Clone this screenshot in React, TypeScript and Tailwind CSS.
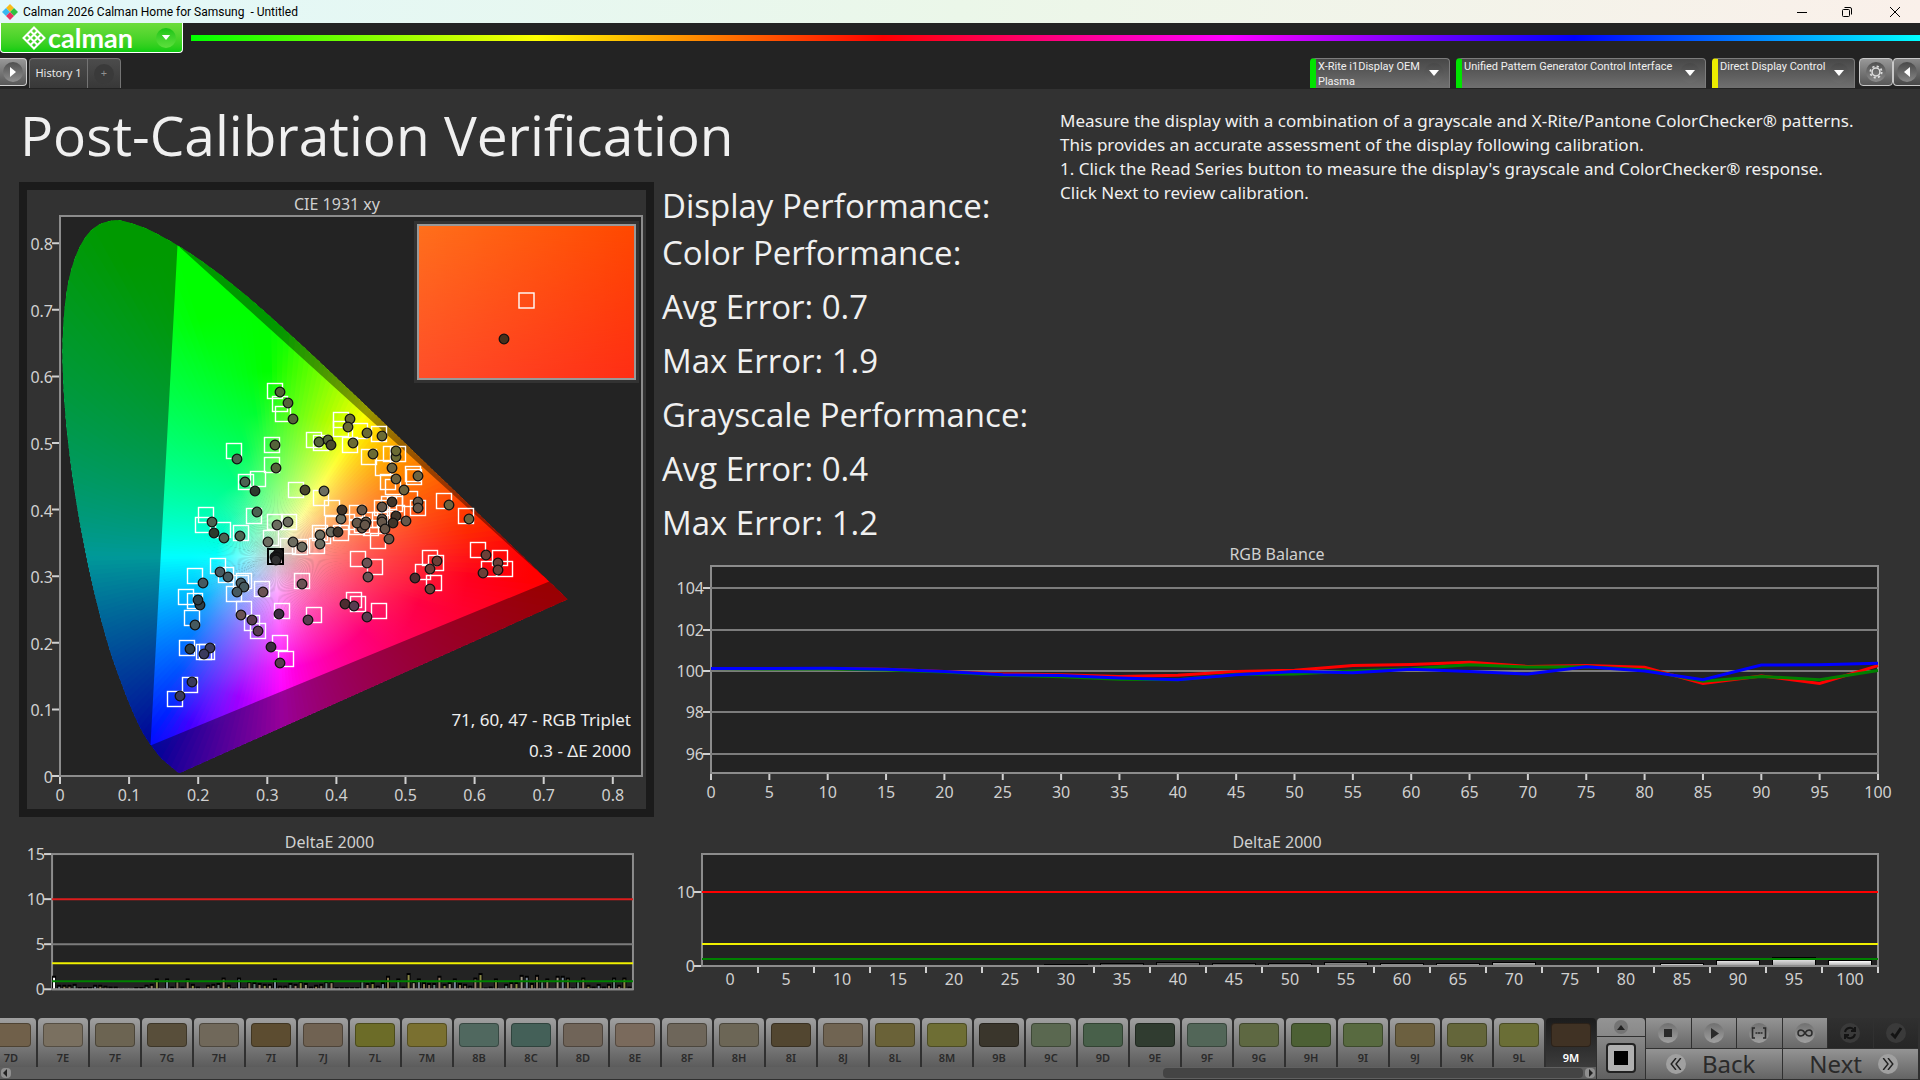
import type { ReactNode } from "react";

type Point = [number, number];

// ---------- CIE chart data ----------

const LOCUS: Point[] = [
  [0.1741, 0.005], [0.1714, 0.0051], [0.1644, 0.0109], [0.1566, 0.0177], [0.144, 0.0297],
  [0.1241, 0.0578], [0.1096, 0.0868], [0.0913, 0.1327], [0.0687, 0.2007], [0.0454, 0.295],
  [0.0235, 0.4127], [0.0082, 0.5384], [0.0039, 0.6548], [0.0139, 0.7502], [0.0389, 0.812],
  [0.0743, 0.8338], [0.1142, 0.8262], [0.1547, 0.8059], [0.1929, 0.7816], [0.2296, 0.7543],
  [0.2658, 0.7243], [0.3016, 0.6923], [0.3373, 0.6589], [0.3731, 0.6245], [0.4087, 0.5896],
  [0.4441, 0.5547], [0.4788, 0.5202], [0.5125, 0.4866], [0.5448, 0.4544], [0.5752, 0.4242],
  [0.6029, 0.3965], [0.627, 0.3725], [0.6482, 0.3514], [0.6658, 0.334], [0.6915, 0.3083],
  [0.714, 0.2859], [0.73, 0.27], [0.7347, 0.2653],
];

const GAMUT: Point[] = [[0.17, 0.797], [0.708, 0.292], [0.131, 0.046]];
const WHITE: Point = [0.3127, 0.329];

const cieX = (x: number) => 33 + x * 691;
const cieY = (y: number) => 586 - y * 666;
const toPoints = (pts: Point[]) => pts.map(([x, y]) => `${cieX(x).toFixed(1)},${cieY(y).toFixed(1)}`);

// Catmull-Rom subdivision, keeps the tip of the locus round
function smooth(pts: Point[], steps = 6): Point[] {
  const out: Point[] = [];
  for (let i = 0; i < pts.length - 1; i++) {
    const p0 = pts[Math.max(i - 1, 0)];
    const p1 = pts[i];
    const p2 = pts[i + 1];
    const p3 = pts[Math.min(i + 2, pts.length - 1)];
    for (let s = 0; s < steps; s++) {
      const t = s / steps;
      const at = (k: 0 | 1) =>
        0.5 *
        (2 * p1[k] +
          (p2[k] - p0[k]) * t +
          (2 * p0[k] - 5 * p1[k] + 4 * p2[k] - p3[k]) * t * t +
          (3 * p1[k] - p0[k] - 3 * p2[k] + p3[k]) * t * t * t);
      out.push([at(0), at(1)]);
    }
  }
  out.push(pts[pts.length - 1]);
  return out;
}

// chromaticity to a display colour at full brightness
function xyToColor(x: number, y: number) {
  const yy = Math.max(y, 0.002);
  const X = x / yy;
  const Z = (1 - x - yy) / yy;
  const rgb = [
    3.2406 * X - 1.5372 - 0.4986 * Z,
    -0.9689 * X + 1.8758 + 0.0415 * Z,
    0.0557 * X - 0.204 + 1.057 * Z,
  ].map((v) => Math.max(v, 0));
  const max = Math.max(...rgb);
  const [r, g, b] = rgb.map((v) => Math.round(255 * Math.pow(v / max, 1 / 1.3)));
  return `rgb(${r},${g},${b})`;
}

const WEDGES = 240;
const REACH = 0.62;
const STOPS = [0, 0.02, 0.05, 0.09, 0.14, 0.2, 0.27, 0.35, 0.45, 0.6, 0.8, 1];

const TARGETS: Point[] = [
  [248, 201], [253, 214], [256, 224], [245, 255], [207, 261], [245, 275], [219, 292], [231, 289],
  [287, 250], [294, 253], [314, 230], [314, 239], [333, 241], [352, 244], [323, 255], [342, 267],
  [364, 264], [371, 264], [356, 278], [386, 284], [387, 287], [361, 292], [366, 297], [383, 309],
  [269, 300], [294, 308], [305, 318], [417, 311], [439, 326], [391, 318], [355, 318], [362, 314],
  [368, 314], [330, 323], [370, 323], [306, 334], [320, 332], [330, 337], [335, 335], [343, 330],
  [344, 338], [353, 330], [362, 327], [314, 343], [351, 351], [293, 343], [296, 346], [290, 356],
  [273, 357], [261, 356], [244, 348], [248, 332], [262, 332], [227, 326], [214, 343], [196, 340],
  [179, 325], [176, 335], [191, 376], [199, 385], [168, 386], [331, 369], [348, 377], [403, 368],
  [409, 373], [396, 382], [451, 360], [473, 368], [462, 379], [478, 379], [217, 391], [214, 393],
  [207, 404], [235, 399], [275, 391], [159, 407], [168, 411], [165, 428], [217, 419], [225, 433],
  [231, 441], [255, 421], [287, 425], [327, 410], [331, 414], [352, 421], [407, 393], [253, 453],
  [259, 469], [160, 458], [177, 462], [180, 462], [163, 495], [148, 509],
];

const MEASURED: { fill: string; at: Point[] }[] = [
  { fill: "#55633a", at: [[253, 202], [261, 213], [266, 229], [248, 255], [249, 278], [292, 252], [301, 250]] },
  { fill: "#4b6351", at: [[210, 269], [218, 292], [230, 322], [185, 332], [213, 346], [197, 348]] },
  { fill: "#2c3a2c", at: [[228, 301], [187, 343]] },
  { fill: "#6b6b34", at: [[323, 229], [321, 237], [340, 243], [355, 246], [326, 253], [346, 264], [369, 267], [369, 261]] },
  { fill: "#4a4a2c", at: [[304, 255], [278, 300]] },
  { fill: "#6e6440", at: [[365, 278], [391, 286], [369, 289], [377, 300], [422, 315], [442, 329]] },
  { fill: "#6c6c60", at: [[297, 301], [314, 329], [304, 342], [293, 345], [293, 354], [275, 357], [266, 352], [241, 352], [250, 335], [261, 332]] },
  { fill: "#66574a", at: [[335, 320], [355, 317], [391, 312], [391, 318], [339, 332], [335, 338], [330, 333], [338, 335], [355, 329], [355, 332], [379, 331], [358, 339], [362, 349]] },
  { fill: "#40352a", at: [[315, 320], [365, 312], [369, 326], [366, 333], [311, 342]] },
  { fill: "#465a60", at: [[193, 382], [201, 387], [176, 393], [214, 393], [217, 397], [210, 402], [168, 435]] },
  { fill: "#2d3f48", at: [[173, 415], [171, 410], [163, 459]] },
  { fill: "#6a5254", at: [[340, 373], [341, 387], [275, 394], [236, 402], [214, 425]] },
  { fill: "#6b4038", at: [[410, 371], [403, 379], [459, 365], [471, 373], [471, 380], [456, 383], [403, 399]] },
  { fill: "#4c2c30", at: [[388, 388], [318, 414]] },
  { fill: "#583c50", at: [[225, 430], [231, 441], [281, 430], [327, 416], [340, 427], [253, 473]] },
  { fill: "#3c2c40", at: [[252, 424], [244, 457]] },
  { fill: "#3a3a5c", at: [[183, 458], [177, 464], [165, 492], [153, 506]] },
  { fill: "#181818", at: [[251, 364], [248, 367], [250, 367]] },
  { fill: "#303030", at: [[249, 370]] },
];

function CieChart() {
  const locus = toPoints(smooth(LOCUS));
  const gamut = toPoints(GAMUT);
  const cx = cieX(WHITE[0]);
  const cy = cieY(WHITE[1]);
  const ray = (i: number): Point => {
    const a = (i / WEDGES) * Math.PI * 2;
    return [WHITE[0] + REACH * Math.cos(a), WHITE[1] + REACH * Math.sin(a)];
  };
  const wedges = Array.from({ length: WEDGES }, (_, i) => i);

  return (
    <svg viewBox="0 0 619 619" className="block w-full" role="img" aria-label="CIE 1931 xy">
      <defs>
        <clipPath id="locus"><polygon points={locus.join(" ")} /></clipPath>
        {wedges.map((i) => {
          const [ex, ey] = ray(i + 0.5);
          return (
            <linearGradient key={i} id={`w${i}`} gradientUnits="userSpaceOnUse" x1={cx} y1={cy} x2={cieX(ex)} y2={cieY(ey)}>
              {STOPS.map((s) => (
                <stop
                  key={s}
                  offset={s}
                  stopColor={xyToColor(WHITE[0] + (ex - WHITE[0]) * s, WHITE[1] + (ey - WHITE[1]) * s)}
                />
              ))}
            </linearGradient>
          );
        })}
        <linearGradient id="insetTop"><stop offset="0" stopColor="#ff701c" /><stop offset="1" stopColor="#ff4800" /></linearGradient>
        <linearGradient id="insetLow"><stop offset="0" stopColor="#ff4e2a" /><stop offset="1" stopColor="#ff2d14" /></linearGradient>
        <linearGradient id="fade" x2="0" y2="1"><stop offset="0" stopColor="#000" /><stop offset="1" stopColor="#fff" /></linearGradient>
        <mask id="insetMask"><rect x="391" y="35" width="217" height="154" fill="url(#fade)" /></mask>
      </defs>

      <text x="310" y="20" textAnchor="middle" className="fill-[#d0d0d0] text-[16px]">CIE 1931 xy</text>
      <rect x="33" y="26" width="582" height="560" fill="#232323" />
      <g clipPath="url(#locus)">
        {wedges.map((i) => (
          <polygon key={i} fill={`url(#w${i})`} points={[`${cx},${cy}`, ...toPoints([ray(i - 0.2), ray(i + 1.2)])].join(" ")} />
        ))}
      </g>
      <path d={`M${locus.join("L")}ZM${gamut.join("L")}Z`} fillRule="evenodd" fill="#000" fillOpacity="0.4" />

      <rect x="33" y="26" width="582" height="560" fill="none" stroke="#8c8c8c" strokeWidth="2" />
      {[0, 1, 2, 3, 4, 5, 6, 7, 8].map((n) => (
        <g key={n} className="fill-[#d0d0d0] text-[16px]">
          <path d={`M${cieX(n / 10)} 587v7M25 ${cieY(n / 10)}h7`} stroke="#d0d0d0" strokeWidth="2" />
          <text x={cieX(n / 10)} y="611" textAnchor="middle">{n === 0 ? "0" : `0.${n}`}</text>
          <text x="26" y={cieY(n / 10) + 7} textAnchor="end">{n === 0 ? "0" : `0.${n}`}</text>
        </g>
      ))}

      {TARGETS.map(([x, y], i) => (
        <rect key={i} x={x - 7.5} y={y - 7.5} width="15" height="15" fill="none" stroke="#fff" strokeWidth="1.4" />
      ))}
      <rect x="241" y="359" width="15" height="15" fill="none" stroke="#000" strokeWidth="2" />
      {MEASURED.map(({ fill, at }) =>
        at.map(([x, y]) => <circle key={`${x}-${y}`} cx={x} cy={y} r="4.8" fill={fill} stroke="#111" strokeWidth="1.3" />)
      )}

      <rect x="387" y="31" width="225" height="162" fill="#323232" />
      <rect x="391" y="35" width="217" height="154" fill="url(#insetTop)" />
      <rect x="391" y="35" width="217" height="154" fill="url(#insetLow)" mask="url(#insetMask)" />
      <rect x="391" y="35" width="217" height="154" fill="none" stroke="#999" strokeWidth="2" />
      <rect x="492" y="103" width="15" height="15" fill="none" stroke="#fff" strokeWidth="1.4" />
      <circle cx="477" cy="149" r="4.8" fill="#47301c" stroke="#111" strokeWidth="1.3" />

      <text x="604" y="536" textAnchor="end" className="fill-[#eee] text-[17px]">71, 60, 47 - RGB Triplet</text>
      <text x="604" y="567" textAnchor="end" className="fill-[#eee] text-[17px]">0.3 - ΔE 2000</text>
    </svg>
  );
}

// ---------- RGB balance ----------

const LEVELS = Array.from({ length: 21 }, (_, i) => i * 5);
const BALANCE = [
  { color: "#ff0000", values: [0.12, 0.12, 0.12, 0.08, -0.02, -0.14, -0.18, -0.26, -0.2, -0.02, 0.04, 0.26, 0.32, 0.42, 0.22, 0.26, 0.18, -0.6, -0.24, -0.6, 0.26] },
  { color: "#008000", values: [0.12, 0.1, 0.1, 0.05, -0.05, -0.2, -0.28, -0.4, -0.42, -0.16, -0.15, 0, 0.11, 0.3, 0.19, 0.2, 0.06, -0.5, -0.26, -0.42, 0.02] },
  { color: "#0000ff", values: [0.12, 0.12, 0.13, 0.09, -0.03, -0.18, -0.22, -0.34, -0.42, -0.18, -0.03, -0.08, 0.08, -0.02, -0.15, 0.2, 0, -0.42, 0.29, 0.3, 0.37] },
];

function RgbBalanceChart() {
  const px = (level: number) => 57 + level * 11.67;
  const py = (v: number) => 131 - v * 20.7;
  return (
    <svg viewBox="0 0 1266 275" className="block w-full" role="img" aria-label="RGB Balance">
      <text x="623" y="20" textAnchor="middle" className="fill-[#d0d0d0] text-[16px]">RGB Balance</text>
      <rect x="57" y="26" width="1167" height="207" fill="#232323" stroke="#8c8c8c" strokeWidth="2" />
      {[4, 2, 0, -2, -4].map((v) => (
        <g key={v}>
          <path d={`M57 ${Math.round(py(v))}H1224`} stroke="#7c7c7c" strokeWidth="2" />
          <path d={`M49 ${Math.round(py(v))}h7`} stroke="#d0d0d0" strokeWidth="2" />
          <text x="50" y={py(v) + 6} textAnchor="end" className="fill-[#d0d0d0] text-[16px]">{100 + v}</text>
        </g>
      ))}
      {LEVELS.map((l) => (
        <g key={l}>
          <path d={`M${px(l)} 234v6`} stroke="#d0d0d0" strokeWidth="2" />
          <text x={px(l)} y="258" textAnchor="middle" className="fill-[#d0d0d0] text-[16px]">{l}</text>
        </g>
      ))}
      {BALANCE.map(({ color, values }) => (
        <polyline
          key={color}
          points={values.map((v, i) => `${px(i * 5)},${py(v)}`).join(" ")}
          fill="none"
          stroke={color}
          strokeWidth="3"
        />
      ))}
    </svg>
  );
}

// ---------- DeltaE charts ----------

const COLOR_ERRORS = [
  1.5, 0.5, 0.5, 0.5, 0.6, 0.25, 0.25, 0.25, 0.5, 0.5, 0.4, 0.3, 0.3, 0.1, 0.1, 0.1, 0.25, 0.25, 0.5, 0.6,
  1.2, 0.1, 1.2, 0.3, 1, 0.3, 1.2, 0.6, 0.3, 0.1, 0.5, 0.6, 0.7, 1.3, 0.5, 0.2, 1.3, 0.2, 0.9, 0.8,
  0.7, 0.6, 0.6, 1.2, 0.4, 0.4, 0.7, 0.6, 0.9, 0.7, 0.3, 0.5, 0.6, 0.9, 0.9, 0.25, 0.25, 0.25, 0.25, 0.25,
  1, 0.7, 0.8, 0.4, 0.8, 1.5, 0.3, 1.2, 0.3, 1.8, 0.9, 1.2, 0.8, 0.7, 0.7, 1.5, 0.6, 0.8, 1.2, 0.7,
  0.6, 0.4, 1.3, 1.8, 0.2, 0.3, 1.2, 0.1, 0.6, 0.8, 0.8, 1.6, 1.5, 0.7, 1.6, 1, 1.2, 0.1, 1.5, 1.5,
  1.3, 0.2, 1, 1.3, 0.5, 0.3, 0.6, 0.3, 0.6, 1.3, 0.5, 1.3, 0.3,
];
const BAR_COLORS = ["#a09888", "#7c8a98", "#8a7a50", "#80705c", "#6c8078", "#98806c", "#8c8c48"];

function ColorErrorChart() {
  const py = (v: number) => 172 - v * 9;
  return (
    <svg viewBox="0 0 634 190" className="block w-full" role="img" aria-label="DeltaE 2000, colors">
      <text x="310" y="31" textAnchor="middle" className="fill-[#d0d0d0] text-[16px]">DeltaE 2000</text>
      <rect x="33" y="37" width="580" height="135" fill="#232323" stroke="#8c8c8c" strokeWidth="2" />
      <path d={`M33 ${py(5)}H613`} stroke="#7c7c7c" strokeWidth="2" />
      {[0, 5, 10, 15].map((v) => (
        <g key={v}>
          <path d={`M25 ${py(v)}h7`} stroke="#d0d0d0" strokeWidth="2" />
          <text x="26" y={py(v) + 6} textAnchor="end" className="fill-[#d0d0d0] text-[16px]">{v}</text>
        </g>
      ))}
      {COLOR_ERRORS.map((v, i) => (
        <g key={i}>
          <rect x={33 + i * 5.13} y={py(v)} width="4" height={v * 9} fill="#000" />
          <rect x={34 + i * 5.13} y={py(v) + 2} width="2" height={Math.max(v * 9 - 2, 0)} fill={i === 0 ? "#fff" : BAR_COLORS[i % 7]} />
        </g>
      ))}
      <path d="M33 172H613" stroke="#8c8c8c" strokeWidth="2" />
      <path d={`M33 ${py(10)}H613`} stroke="#dc1c1c" strokeWidth="2" />
      <path d="M33 146H613" stroke="#f0f000" strokeWidth="2" />
      <path d="M33 164H613" stroke="#008000" strokeWidth="2" />
    </svg>
  );
}

const GRAY_ERRORS = [0, 0, 0.1, 0.1, 0.2, 0.2, 0.3, 0.4, 0.5, 0.4, 0.4, 0.6, 0.4, 0.4, 0.6, 0.2, 0.2, 0.4, 0.8, 1.2, 0.8];

function GrayErrorChart() {
  const py = (v: number) => Math.round(149 - v * 7.4);
  return (
    <svg viewBox="0 0 1266 190" className="block w-full" role="img" aria-label="DeltaE 2000, grayscale">
      <defs>
        <linearGradient id="shade" x2="0" y2="1"><stop offset="0" stopColor="#000" stopOpacity="0" /><stop offset="1" stopColor="#000" stopOpacity="0.35" /></linearGradient>
      </defs>
      <text x="623" y="31" textAnchor="middle" className="fill-[#d0d0d0] text-[16px]">DeltaE 2000</text>
      <rect x="48" y="37" width="1176" height="112" fill="#232323" stroke="#8c8c8c" strokeWidth="2" />
      {[0, 10].map((v) => (
        <g key={v}>
          <path d={`M40 ${py(v)}h7`} stroke="#d0d0d0" strokeWidth="2" />
          <text x="41" y={py(v) + 6} textAnchor="end" className="fill-[#d0d0d0] text-[16px]">{v}</text>
        </g>
      ))}
      {GRAY_ERRORS.map((v, i) => {
        const gray = Math.round(i * 12.75);
        const x = 54 + i * 56;
        return (
          <g key={i}>
            <rect x={x} y={py(v)} width="44" height={149 - py(v)} fill="#000" />
            {v > 0.2 && <rect x={x + 1} y={py(v) + 1} width="42" height={148 - py(v)} fill={`rgb(${gray},${gray},${gray})`} />}
            {v > 0.2 && <rect x={x + 1} y={py(v) + 1} width="42" height={148 - py(v)} fill="url(#shade)" />}
            <path d={`M${104 + i * 56} 150v6`} stroke="#d0d0d0" strokeWidth="2" />
            <text x={76 + i * 56} y="168" textAnchor="middle" className="fill-[#d0d0d0] text-[16px]">{i * 5}</text>
          </g>
        );
      })}
      <path d="M48 149H1224" stroke="#8c8c8c" strokeWidth="2" />
      <path d="M48 75H1224" stroke="#ff0000" strokeWidth="2" />
      <path d="M48 127H1224" stroke="#f0f000" strokeWidth="2" />
      <path d="M48 142H1224" stroke="#008000" strokeWidth="2" />
    </svg>
  );
}

// ---------- window chrome ----------

function AppIcon() {
  return (
    <svg viewBox="0 0 18 18" className="size-[18px]">
      <path d="M9 1l4 4-4 4-4-4z" fill="#f8bc18" />
      <path d="M5 5l4 4-4 4-4-4z" fill="#38b8f0" />
      <path d="M13 5l4 4-4 4-4-4z" fill="#30c040" />
      <path d="M9 9l4 4-4 4-4-4z" fill="#e83060" />
    </svg>
  );
}

function TitleBar() {
  return (
    <div className="flex h-[23px] items-center bg-linear-to-r from-[#e2f8fa] via-[#ebf7e9] to-[#faf0ea] text-black">
      <div className="flex flex-1 items-center gap-1 pl-px">
        <AppIcon />
        <span className="font-['Roboto',sans-serif] text-[12px] whitespace-pre">Calman 2026 Calman Home for Samsung  - Untitled</span>
      </div>
      <button aria-label="Minimize" className="flex w-[45px] justify-center">
        <svg viewBox="0 0 10 10" className="size-[10px]"><path d="M0 5.5h10" stroke="#000" /></svg>
      </button>
      <button aria-label="Restore" className="flex w-[45px] justify-center">
        <svg viewBox="0 0 10 10" className="size-[10px]" fill="none" stroke="#000">
          <rect x="0.5" y="2.5" width="7" height="7" rx="1" />
          <path d="M2.5.5H8a1.5 1.5 0 0 1 1.5 1.5v5.5" />
        </svg>
      </button>
      <button aria-label="Close" className="flex w-[51px] justify-center">
        <svg viewBox="0 0 10 10" className="size-[10px]"><path d="M0 0l10 10M10 0L0 10" stroke="#000" /></svg>
      </button>
    </div>
  );
}

function Caret() {
  return (
    <span className="flex size-5 shrink-0 items-center justify-center rounded-full bg-linear-to-b from-[#484848] to-[#6c6c6c]">
      <svg viewBox="0 0 10 6" className="h-[6px] w-[10px]"><path d="M0 0h10L5 6z" fill="#fff" /></svg>
    </span>
  );
}

function Header() {
  const devices = [
    { lines: ["X-Rite i1Display OEM", "Plasma"], width: "w-[140px]", edge: "border-l-[#00e400]" },
    { lines: ["Unified Pattern Generator Control Interface"], width: "w-[250px]", edge: "border-l-[#00e400]" },
    { lines: ["Direct Display Control"], width: "w-[143px]", edge: "border-l-[#ecec00]" },
  ];
  return (
    <header className="bg-[#232323]">
      <div className="flex h-[30px] items-start gap-2">
        <button className="flex h-[30px] w-[183px] items-center rounded-b border border-t-0 border-white bg-linear-to-b from-[#6cdc3c] to-[#08cc10] pl-[21px]">
          <svg viewBox="0 0 24 24" className="h-6 w-6" fill="none" stroke="#fff" strokeWidth="2">
            <path d="M12 1.5L22.5 12 12 22.5 1.5 12zM8.5 5l10.5 10.5M5 8.5L15.5 19M15.5 5L5 15.5M19 8.5L8.5 19" />
          </svg>
          <span className="ml-[2px] font-['Lato',sans-serif] text-[27px] leading-6 font-bold text-white">calman</span>
          <span className="mr-[6px] ml-auto flex size-5 items-center justify-center rounded-full bg-linear-to-b from-[#14c414] to-[#5ce03c]">
            <svg viewBox="0 0 10 6" className="h-[5px] w-[10px]"><path d="M0 0h10L5 6z" fill="#fff" /></svg>
          </span>
        </button>
        <div className="mt-3 h-[6px] flex-1 bg-[linear-gradient(90deg,#0f0,#ff0,#f00,#f0f,#00f,#0ff)]" />
      </div>
      <div className="flex h-9 items-start pt-[5px]">
        <button aria-label="Expand" className="flex h-7 w-[27px] items-center justify-center rounded-r border border-l-0 border-[#d0d0d0] bg-linear-to-b from-[#989898] to-[#585858]">
          <span className="flex size-5 items-center justify-center rounded-full bg-linear-to-b from-[#505050] to-[#909090]">
            <svg viewBox="0 0 6 10" className="h-[10px] w-[6px]"><path d="M0 0v10l6-5z" fill="#fff" /></svg>
          </span>
        </button>
        <div className="ml-[2px] flex h-[30px] rounded-t border border-b-0 border-[#747474] bg-linear-to-b from-[#4c4c4c] to-[#383838]">
          <button className="w-[58px] border-r border-[#747474] text-[11px] text-[#e8e8e8]">History 1</button>
          <button aria-label="Add history" className="flex w-[32px] items-center justify-center">
            <span className="flex size-5 items-center justify-center rounded-full bg-[#3a3a3a] text-[11px] text-[#909090]">+</span>
          </button>
        </div>
        <div className="mr-1 ml-auto flex items-start gap-[6px]">
          {devices.map((d) => (
            <button
              key={d.lines[0]}
              className={`${d.width} ${d.edge} flex h-[30px] items-start rounded-t border-t border-r border-l-[6px] border-t-[#7c7c7c] border-r-[#7c7c7c] bg-linear-to-b from-[#484848] to-[#707070] pl-[2px] text-left font-['Roboto',sans-serif] text-[11px] leading-[15px] text-[#f0f0f0]`}
            >
              <span className="flex-1 whitespace-nowrap">
                {d.lines.map((l) => <span key={l} className="block">{l}</span>)}
              </span>
              <span className="mt-1 mr-[5px]"><Caret /></span>
            </button>
          ))}
        </div>
        <button aria-label="Settings" className="flex h-7 w-[34px] items-center justify-center rounded border border-[#c8c8c8] bg-linear-to-b from-[#989898] to-[#585858]">
          <span className="flex size-5 items-center justify-center rounded-full bg-linear-to-b from-[#505050] to-[#8c8c8c]">
            <svg viewBox="0 0 16 16" className="size-[14px]" fill="none" stroke="#ddd">
              <circle cx="8" cy="8" r="4.5" strokeWidth="1.8" />
              <circle cx="8" cy="8" r="6.5" strokeWidth="2" strokeDasharray="2.5 2.6" />
            </svg>
          </span>
        </button>
        <button aria-label="Collapse" className="flex h-7 w-[27px] items-center justify-center rounded-l border border-r-0 border-[#c8c8c8] bg-linear-to-b from-[#888] to-[#484848]">
          <span className="flex size-5 items-center justify-center rounded-full bg-linear-to-b from-[#484848] to-[#888]">
            <svg viewBox="0 0 6 10" className="h-[10px] w-[6px]"><path d="M6 0v10L0 5z" fill="#fff" /></svg>
          </span>
        </button>
      </div>
    </header>
  );
}

// ---------- bottom bar ----------

const PATCHES = [
  ["7D", "#70604a"], ["7E", "#7a7060"], ["7F", "#6c6452"], ["7G", "#584e3a"], ["7H", "#70685a"],
  ["7I", "#5c4c30"], ["7J", "#706252"], ["7L", "#6c6c28"], ["7M", "#7a7030"], ["8B", "#50685f"],
  ["8C", "#446058"], ["8D", "#706458"], ["8E", "#7a6a5c"], ["8F", "#6e665a"], ["8H", "#6c6656"],
  ["8I", "#524630"], ["8J", "#706452"], ["8L", "#6a6238"], ["8M", "#6e6e34"], ["9B", "#3a362c"],
  ["9C", "#5a6850"], ["9D", "#48604a"], ["9E", "#303c30"], ["9F", "#526658"], ["9G", "#5e6842"],
  ["9H", "#4c6034"], ["9I", "#586a40"], ["9J", "#6c6040"], ["9K", "#64663a"], ["9L", "#6a6e36"],
  ["9M", "#403224"],
];

function ToolButton({ label, dark, children }: { label: string; dark?: boolean; children: ReactNode }) {
  return (
    <button
      aria-label={label}
      className={`flex h-[30px] items-center justify-center ${dark ? "bg-linear-to-b from-[#303030] to-[#262626]" : "bg-linear-to-b from-[#949494] to-[#686868]"}`}
    >
      <span className={`flex size-5 items-center justify-center rounded-full ${dark ? "bg-[#3a3a3a]" : "bg-linear-to-b from-[#707070] to-[#a0a0a0]"}`}>
        <svg viewBox="0 0 16 16" className="size-4" fill="none" stroke={dark ? "#141414" : "#2a2a2a"} strokeWidth="2">{children}</svg>
      </span>
    </button>
  );
}

function BottomBar() {
  return (
    <footer className="flex h-[62px] items-start gap-px bg-[#303030] pr-[2px] text-[#2a2a2a]">
      <div className="min-w-0 flex-1">
        <div className="flex h-[49px] justify-end gap-[2px] overflow-hidden">
          {PATCHES.map(([name, color]) => {
            const active = name === "9M";
            return (
              <button
                key={name}
                className={`flex w-[50px] shrink-0 flex-col items-center rounded-t pt-[5px] ${active ? "bg-linear-to-b from-[#1c1c1c] to-[#3c3c3c] text-white" : "bg-linear-to-b from-[#a0a0a0] to-[#5c5c5c]"}`}
              >
                <span className="h-6 w-10 rounded border border-black/30" style={{ backgroundColor: color }} />
                <span className="mt-[3px] text-[11px] leading-4 font-semibold">{name}</span>
              </button>
            );
          })}
        </div>
        <div className="flex h-3 items-center justify-between bg-[#606060] px-px">
          <svg viewBox="0 0 10 10" className="size-[10px] rounded bg-[#909090]"><path d="M6 1v8L2 5z" fill="#222" /></svg>
          <div className="mr-[2px] ml-auto h-[10px] w-[420px] rounded bg-[#444]" />
          <svg viewBox="0 0 10 10" className="size-[10px] rounded bg-[#909090]"><path d="M4 1v8l4-4z" fill="#222" /></svg>
        </div>
      </div>
      <div className="flex w-12 flex-col gap-px">
        <button aria-label="Expand panel" className="flex h-[18px] items-center justify-center rounded-t bg-linear-to-b from-[#949494] to-[#888]">
          <span className="flex size-[14px] items-center justify-center rounded-full bg-[#747474]">
            <svg viewBox="0 0 8 5" className="h-[5px] w-2"><path d="M0 5h8L4 0z" fill="#222" /></svg>
          </span>
        </button>
        <button aria-label="Stop pattern" className="flex h-[42px] items-center justify-center bg-linear-to-b from-[#888] to-[#606060]">
          <span className="flex size-[30px] items-center justify-center rounded border-2 border-[#222] bg-[#b0b0b0]">
            <span className="size-[14px] bg-black" />
          </span>
        </button>
      </div>
      <div className="w-[272px]">
        <div className="grid grid-cols-6 gap-px">
          <ToolButton label="Stop"><path d="M4 4h8v8H4z" fill="#2a2a2a" stroke="none" /></ToolButton>
          <ToolButton label="Play"><path d="M5 3v11l8-5.5z" fill="#2a2a2a" stroke="none" /></ToolButton>
          <ToolButton label="Read series"><path d="M4 3H1.5v10H4M12 3h2.5v10H12M4.500 8h2M7 8h2M9.500 8h2" strokeWidth="1.6" /></ToolButton>
          <ToolButton label="Continuous"><path d="M8 8C6.500 5.500 5 5 4 5a3 3 0 0 0 0 6c1 0 2.500-.5 4-3s3-3 4-3a3 3 0 0 1 0 6c-1 0-2.500-.5-4-3z" strokeWidth="1.5" /></ToolButton>
          <ToolButton label="Refresh" dark><path d="M3 7a5 5 0 0 1 9-2M13 9a5 5 0 0 1-9 2M13 2v4H9M3 14v-4h4" /></ToolButton>
          <ToolButton label="Accept" dark><path d="M3.500 8.500L7 12l6-9" strokeWidth="3" /></ToolButton>
        </div>
        <div className="mt-px grid grid-cols-2 gap-px text-2xl leading-[30px]">
          <button className="flex h-[30px] items-center gap-4 bg-linear-to-b from-[#949494] to-[#646464] pl-5">
            <span className="flex size-5 items-center justify-center rounded-full bg-[#a0a0a0]">
              <svg viewBox="0 0 10 10" className="size-3" fill="none" stroke="#222" strokeWidth="1.2"><path d="M5 0L1 5l4 5M9 0L5 5l4 5" /></svg>
            </span>
            Back
          </button>
          <button className="flex h-[30px] items-center justify-end gap-4 bg-linear-to-b from-[#949494] to-[#646464] pr-5">
            Next
            <span className="flex size-5 items-center justify-center rounded-full bg-[#a0a0a0]">
              <svg viewBox="0 0 10 10" className="size-3" fill="none" stroke="#222" strokeWidth="1.2"><path d="M1 0l4 5-4 5M5 0l4 5-4 5" /></svg>
            </span>
          </button>
        </div>
      </div>
    </footer>
  );
}

export default function App() {
  return (
    <div className="flex min-h-screen flex-col bg-[#323232] font-['Noto_Sans',sans-serif]">
      <TitleBar />
      <Header />
      <main className="grid flex-1 grid-cols-[654fr_406fr_860fr] grid-rows-[93px_358px_auto_1fr] text-[#f0f0f0]">
        <h1 className="col-span-2 pt-[6px] pl-5 font-['Open_Sans',sans-serif] text-[55px] leading-[80px] whitespace-nowrap">Post-Calibration Verification</h1>
        <section className="row-span-2 pt-5 text-[17px] leading-6 whitespace-nowrap">
          <p>Measure the display with a combination of a grayscale and X-Rite/Pantone ColorChecker® patterns.</p>
          <p>This provides an accurate assessment of the display following calibration.</p>
          <p>1. Click the Read Series button to measure the display's grayscale and ColorChecker® response.</p>
          <p>Click Next to review calibration.</p>
        </section>
        <div className="row-span-2 self-start pl-[19px]">
          <div className="border-8 border-[#1b1b1b]"><CieChart /></div>
        </div>
        <section className="pl-2 font-['Open_Sans',sans-serif] text-[33px] leading-[54px] whitespace-nowrap">
          <h2 className="leading-[47px]">Display Performance:</h2>
          <h3 className="mb-1 leading-[47px]">Color Performance:</h3>
          <p>Avg Error: 0.7</p>
          <p>Max Error: 1.9</p>
          <h3>Grayscale Performance:</h3>
          <p>Avg Error: 0.4</p>
          <p>Max Error: 1.2</p>
        </section>
        <div className="col-span-2"><RgbBalanceChart /></div>
        <div className="pl-[19px]"><ColorErrorChart /></div>
        <div className="col-span-2"><GrayErrorChart /></div>
      </main>
      <BottomBar />
    </div>
  );
}
